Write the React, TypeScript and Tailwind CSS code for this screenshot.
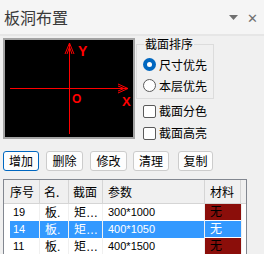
import React from 'react';

const rows = [
  { id: '19', name: '板.', sec: '矩…', param: '300*1000', sel: false },
  { id: '14', name: '板.', sec: '矩…', param: '400*1050', sel: true },
  { id: '11', name: '板.', sec: '矩…', param: '400*1500', sel: false },
];

function Radio({ checked, label }: { checked: boolean; label: string }) {
  return (
    <div className="flex items-center h-[21px]">
      {checked ? (
        <span className="w-[13px] h-[13px] rounded-full bg-[#0067c0] flex items-center justify-center">
          <span className="w-[5px] h-[5px] rounded-full bg-white" />
        </span>
      ) : (
        <span className="w-[13px] h-[13px] rounded-full border border-[#5a5a5a] bg-white" />
      )}
      <span className="ml-[3px]">{label}</span>
    </div>
  );
}

function Check({ label }: { label: string }) {
  return (
    <div className="flex items-center h-[22px]">
      <span className="w-[13px] h-[13px] rounded-[2px] border border-[#5a5a5a] bg-white" />
      <span className="ml-[3px]">{label}</span>
    </div>
  );
}

export default function App() {
  const btn = 'h-[20px] rounded-[3px] border bg-[#fdfdfd] flex items-center justify-center';
  return (
    <div
      className="w-[264px] h-[254px] overflow-hidden bg-[#f0f0f0] text-[12px] text-black"
      style={{ fontFamily: '"Noto Sans CJK SC", "Liberation Sans", sans-serif' }}
    >
      {/* title bar */}
      <div className="h-[36px] bg-[#f5f5f5] border-b-2 border-[#e6e6e6] flex items-center pl-[4px] pr-[6px]">
        <span className="text-[16px] text-[#3a3a3a] leading-none">板洞布置</span>
        <svg width="9" height="6" viewBox="0 0 9 6" className="ml-auto mt-[1px]">
          <polygon points="0,0 9,0 4.5,5" fill="#707070" />
        </svg>
        <span className="ml-[9px] text-[#707070] text-[13px] leading-none">✕</span>
      </div>

      <div className="pl-[3px] pt-[2px]">
        <div className="flex">
          {/* canvas */}
          <div className="w-[132px] h-[101px] border-2 border-[#a3a3a3] bg-black">
            <svg width="128" height="97" viewBox="5 42 128 97" className="block">
              <g stroke="#ff0000" strokeWidth="1" fill="none">
                <line x1="69.5" y1="45" x2="69.5" y2="136" />
                <line x1="10" y1="90.5" x2="128" y2="90.5" />
                <polyline points="65,56 69.5,45 74,56" />
                <polyline points="67,56 69.5,49 72,56" />
                <polyline points="118,86 128,90.5 118,95" />
                <polyline points="118,88 124,90.5 118,93" />
              </g>
              <g fill="#ff0000" fontWeight="bold" fontFamily='"Liberation Sans", sans-serif'>
                <text x="78" y="58" fontSize="14">Y</text>
                <text x="72" y="105" fontSize="12">O</text>
                <text x="122" y="108" fontSize="13">X</text>
              </g>
            </svg>
          </div>

          {/* options */}
          <div className="ml-[1px] pt-[4px]">
            <div className="relative w-[78px] h-[55px] border border-[#dcdcdc] mt-[2px] pl-[6px] pt-[9px]">
              <span className="absolute left-[7px] top-[-9px] bg-[#f0f0f0] px-[1px] leading-[16px]">截面排序</span>
              <Radio checked label="尺寸优先" />
              <Radio checked={false} label="本层优先" />
            </div>
            <div className="pl-[7px] pt-[1px]">
              <Check label="截面分色" />
              <Check label="截面高亮" />
            </div>
          </div>
        </div>

        {/* buttons */}
        <div className="flex mt-[7px]">
          <div className={`${btn} w-[36px] border-[#0067c0] border-[1.5px]`}>增加</div>
          <div className={`${btn} w-[37px] ml-[7px] border-[#cccccc]`}>删除</div>
          <div className={`${btn} w-[37px] ml-[7px] border-[#cccccc]`}>修改</div>
          <div className={`${btn} w-[36px] ml-[6px] border-[#cccccc]`}>清理</div>
          <div className={`${btn} w-[35px] ml-[9px] border-[#cccccc]`}>复制</div>
        </div>

        {/* table */}
        <div className="mt-[8px] w-[244px] border border-[#828790] bg-white">
          <div className="flex h-[24px] bg-[#f0f0f0] border-b border-[#d5d5d5]">
            <div className="w-[36px] pl-[6px] flex items-center border-r border-[#d5d5d5]">序号</div>
            <div className="w-[29px] pl-[4px] flex items-center border-r border-[#d5d5d5]">名.</div>
            <div className="w-[34px] pl-[4px] flex items-center border-r border-[#d5d5d5]">截面</div>
            <div className="w-[102px] pl-[5px] flex items-center border-r border-[#d5d5d5]">参数</div>
            <div className="w-[36px] pl-[5px] flex items-center border-r border-[#d5d5d5]">材料</div>
            <div className="flex-1" />
          </div>
          {rows.map((r) => {
            const hl = r.sel ? 'bg-[#3399ff] text-white' : '';
            return (
              <div key={r.id} className="flex h-[17px] text-[11px]" style={{ fontFamily: '"Liberation Sans", "Noto Sans CJK SC", sans-serif' }}>
                <div className="w-[36px] flex border-r border-[#f0f0f0]">
                  <div className={`flex-1 ml-[6px] pl-[3px] flex items-center ${hl}`}>{r.id}</div>
                </div>
                <div className={`w-[29px] pl-[5px] flex items-center border-r border-[#f0f0f0] text-[12px] ${hl}`}>{r.name}</div>
                <div className={`w-[34px] pl-[5px] flex items-center border-r border-[#f0f0f0] text-[12px] ${hl}`}>{r.sec}</div>
                <div className={`w-[102px] pl-[5px] flex items-center border-r border-[#f0f0f0] ${hl}`}>{r.param}</div>
                <div
                  className={`w-[36px] pl-[5px] flex items-center text-[12px] border-b border-white ${
                    r.sel ? 'bg-[#3399ff] text-white' : 'bg-[#8b0e0a] text-black'
                  }`}
                >
                  无
                </div>
                <div className="flex-1 border-l border-[#f0f0f0]" />
              </div>
            );
          })}
        </div>
      </div>
    </div>
  );
}
